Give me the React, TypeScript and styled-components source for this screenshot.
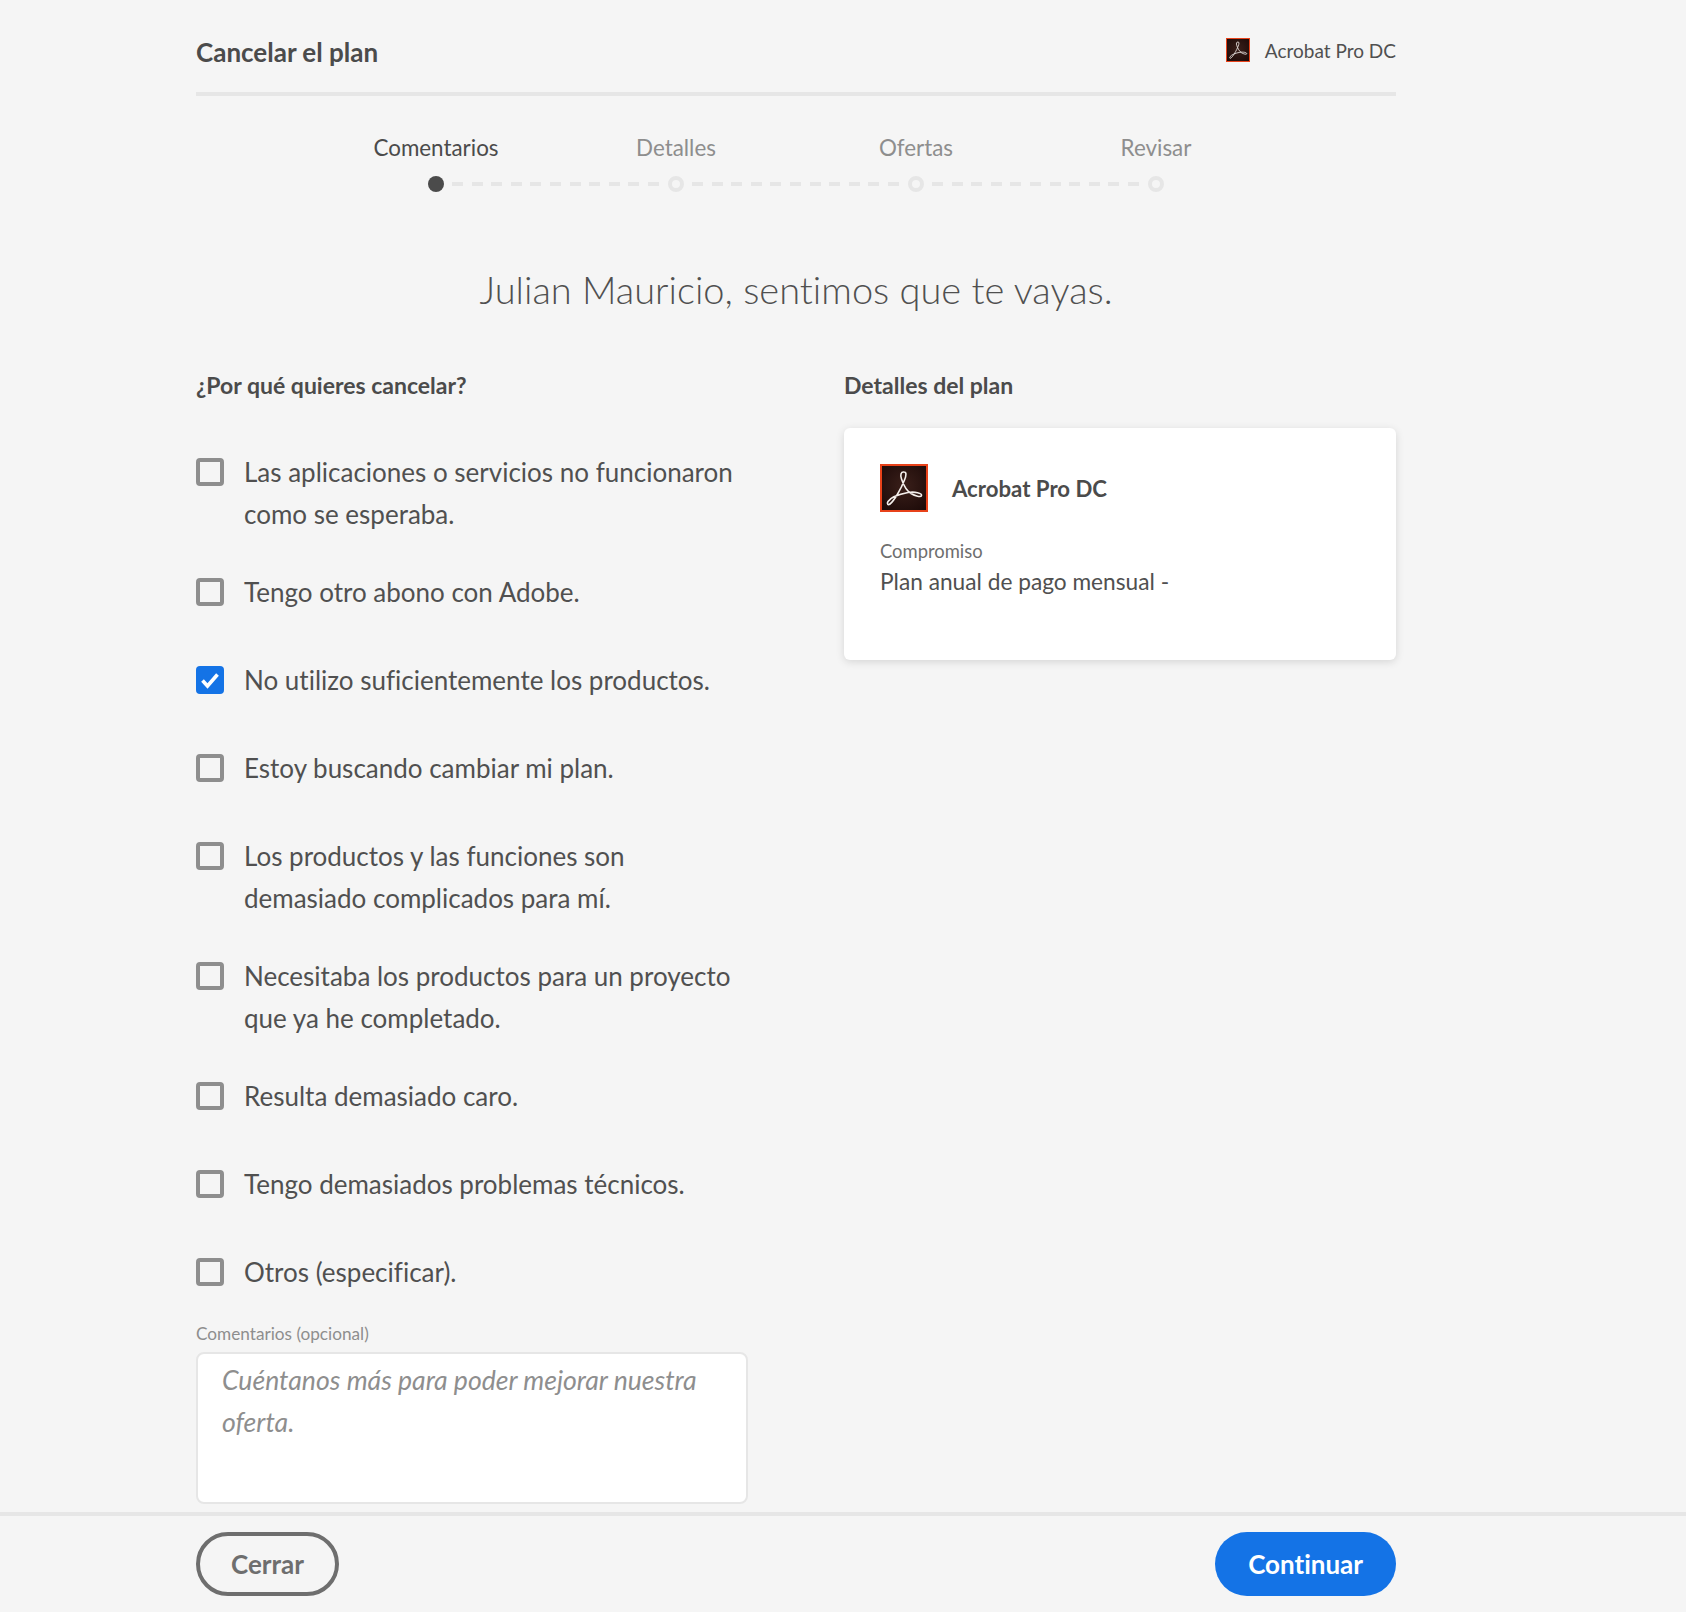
import React from 'react';
import styled, { createGlobalStyle } from 'styled-components';

const COLORS = {
    page: '#f5f5f5',
    dark: '#4b4b4b',
    text: '#505050',
    muted: '#8e8e8e',
    line: '#e6e6e6',
    blue: '#1473e6',
};

const FONT = '"Lato", "Open Sans", sans-serif';

const GlobalStyle = createGlobalStyle`
    html, body {
        margin: 0;
        padding: 0;
        background: ${COLORS.page};
        font-family: ${FONT};
        font-variant-ligatures: none;
        color: ${COLORS.text};
    }
    * {
        box-sizing: border-box;
    }
`;

const Page = styled.div`
    display: flex;
    flex-direction: column;
    height: 1612px;
    overflow: hidden;
`;

const Main = styled.main`
    flex: 1;
    width: 1200px;
    margin-left: 196px;
`;

const Header = styled.header`
    display: flex;
    align-items: center;
    justify-content: space-between;
    height: 96px;
    padding-top: 12px;
    border-bottom: 4px solid ${COLORS.line};
`;

const PlanTitle = styled.h1`
    margin: 0;
    font-size: 26px;
    font-weight: 700;
    color: ${COLORS.dark};
`;

const ProductTag = styled.div`
    display: flex;
    align-items: center;
    gap: 15px;
    margin-bottom: 4px;
    font-size: 19px;
    color: ${COLORS.text};
`;

const Stepper = styled.ol`
    display: grid;
    grid-template-columns: repeat(4, 240px);
    justify-content: center;
    margin: 0;
    padding: 36px 0 0;
    list-style: none;
`;

const Step = styled.li`
    display: flex;
    flex-direction: column;
    align-items: center;
    position: relative;
`;

const StepLabel = styled.span<{ $active?: boolean }>`
    font-size: 22.4px;
    line-height: 32px;
    color: ${(props) => (props.$active ? COLORS.dark : COLORS.muted)};
`;

const StepDot = styled.span<{ $active?: boolean }>`
    width: 16px;
    height: 16px;
    margin-top: 12px;
    border-radius: 50%;
    background: ${(props) => (props.$active ? COLORS.dark : 'transparent')};
    border: ${(props) => (props.$active ? 'none' : `4px solid ${COLORS.line}`)};
`;

const StepDash = styled.span`
    position: absolute;
    left: calc(50% + 16px);
    width: 208px;
    top: 50px;
    height: 4px;
    background: repeating-linear-gradient(
        to right,
        ${COLORS.line} 0,
        ${COLORS.line} 11px,
        transparent 11px,
        transparent 19.6px
    );
`;

const Greeting = styled.h2`
    margin: 69px 0 0;
    font-size: 38px;
    line-height: 56px;
    font-weight: 300;
    text-align: center;
    color: ${COLORS.text};
`;

const Columns = styled.div`
    display: grid;
    grid-template-columns: 552px 552px;
    justify-content: space-between;
    margin-top: 52px;
`;

const SectionTitle = styled.h3`
    margin: 0;
    font-size: 23px;
    line-height: 32px;
    font-weight: 700;
    color: ${COLORS.dark};
`;

const ReasonList = styled.div`
    margin-top: 50px;
`;

const Reason = styled.label`
    display: flex;
    gap: 20px;
    min-height: 52px;
    margin-bottom: 36px;
    font-size: 26px;
    line-height: 42px;
    color: ${COLORS.text};
`;

const Box = styled.span<{ $checked?: boolean }>`
    display: flex;
    align-items: center;
    justify-content: center;
    flex: none;
    width: 28px;
    height: 28px;
    margin-top: 7px;
    border-radius: 4px;
    background: ${(props) => (props.$checked ? COLORS.blue : 'transparent')};
    border: ${(props) => (props.$checked ? 'none' : `4px solid ${COLORS.muted}`)};
`;

const CommentLabel = styled.div`
    margin-top: -17px;
    font-size: 17.2px;
    line-height: 24px;
    color: ${COLORS.muted};
`;

const CommentArea = styled.div`
    height: 152px;
    margin-top: 6px;
    padding: 5px 24px;
    font-size: 26.6px;
    line-height: 42px;
    font-style: italic;
    color: ${COLORS.muted};
    background: #fff;
    border: 2px solid ${COLORS.line};
    border-radius: 8px;
`;

const PlanCard = styled.section`
    height: 232px;
    margin-top: 27px;
    padding: 36px;
    background: #fff;
    border-radius: 6px;
    box-shadow: 0 2px 8px rgba(0, 0, 0, 0.13);
`;

const CardProduct = styled.div`
    display: flex;
    align-items: center;
    gap: 24px;
    font-size: 22.2px;
    font-weight: 700;
    color: ${COLORS.dark};
`;

const CardLabel = styled.div`
    margin-top: 26px;
    font-size: 18.4px;
    line-height: 26px;
    color: #6e6e6e;
`;

const CardValue = styled.div`
    margin-top: 2px;
    font-size: 22.7px;
    line-height: 32px;
    color: ${COLORS.text};
`;

const Footer = styled.footer`
    flex: none;
    display: flex;
    justify-content: space-between;
    align-items: center;
    height: 100px;
    padding: 0 290px 0 196px;
    border-top: 4px solid ${COLORS.line};
`;

const Button = styled.button<{ $primary?: boolean }>`
    height: 64px;
    padding: 0 ${(props) => (props.$primary ? 33 : 31)}px;
    border-radius: 32px;
    font-family: ${FONT};
    font-size: 26px;
    font-weight: 700;
    font-variant-ligatures: none;
    color: ${(props) => (props.$primary ? '#fff' : '#6e6e6e')};
    background: ${(props) => (props.$primary ? COLORS.blue : 'transparent')};
    border: ${(props) => (props.$primary ? 'none' : '4px solid #6e6e6e')};
`;

const AcrobatIcon: React.FC<{ size: number }> = ({ size }) => (
    <svg width={size} height={size} viewBox="0 0 48 48" style={{ flex: 'none' }}>
        <defs>
            <radialGradient id={`acrobat-bg-${size}`} cx="0.5" cy="0.45" r="0.7">
                <stop offset="0" stopColor="#3a1f1a" />
                <stop offset="1" stopColor="#1c0a08" />
            </radialGradient>
        </defs>
        <rect x="1" y="1" width="46" height="46" fill={`url(#acrobat-bg-${size})`} stroke="#e8421a" strokeWidth="2" />
        <path
            d="M24 8C21 7.5 20 11 21.5 15 23.5 21 27 27 31 29.5 35 32 41 33.5 41.5 31.5 42 29 35 27.5 28 28.5 20 30 11 33 8 37.5 6.5 40 8 41.5 10 40 14 37 21 25 24.5 16 26.5 11 26.5 8 24 8z"
            fill="none"
            stroke="#f4efec"
            strokeWidth="1.6"
        />
    </svg>
);

const CheckMark: React.FC = () => (
    <svg width="20" height="20" viewBox="0 0 20 20">
        <path d="M2.5 10.5 7.5 16 17.5 4.5" fill="none" stroke="#fff" strokeWidth="3.6" />
    </svg>
);

const steps = ['Comentarios', 'Detalles', 'Ofertas', 'Revisar'];

const reasons = [
    { text: 'Las aplicaciones o servicios no funcionaron como se esperaba.' },
    { text: 'Tengo otro abono con Adobe.' },
    { text: 'No utilizo suficientemente los productos.', checked: true },
    { text: 'Estoy buscando cambiar mi plan.' },
    { text: 'Los productos y las funciones son demasiado complicados para mí.' },
    { text: 'Necesitaba los productos para un proyecto que ya he completado.' },
    { text: 'Resulta demasiado caro.' },
    { text: 'Tengo demasiados problemas técnicos.' },
    { text: 'Otros (especificar).' },
];

const App: React.FC = () => (
    <Page>
        <GlobalStyle />
        <Main>
            <Header>
                <PlanTitle>Cancelar el plan</PlanTitle>
                <ProductTag>
                    <AcrobatIcon size={24} />
                    Acrobat Pro DC
                </ProductTag>
            </Header>
            <Stepper>
                {steps.map((step, i) => (
                    <Step key={step}>
                        <StepLabel $active={i === 0}>{step}</StepLabel>
                        <StepDot $active={i === 0} />
                        {i < steps.length - 1 && <StepDash />}
                    </Step>
                ))}
            </Stepper>
            <Greeting>Julian Mauricio, sentimos que te vayas.</Greeting>
            <Columns>
                <div>
                    <SectionTitle>¿Por qué quieres cancelar?</SectionTitle>
                    <ReasonList>
                        {reasons.map((reason) => (
                            <Reason key={reason.text}>
                                <Box $checked={reason.checked}>{reason.checked && <CheckMark />}</Box>
                                <span>{reason.text}</span>
                            </Reason>
                        ))}
                    </ReasonList>
                    <CommentLabel>Comentarios (opcional)</CommentLabel>
                    <CommentArea>Cuéntanos más para poder mejorar nuestra oferta.</CommentArea>
                </div>
                <div>
                    <SectionTitle>Detalles del plan</SectionTitle>
                    <PlanCard>
                        <CardProduct>
                            <AcrobatIcon size={48} />
                            Acrobat Pro DC
                        </CardProduct>
                        <CardLabel>Compromiso</CardLabel>
                        <CardValue>Plan anual de pago mensual -</CardValue>
                    </PlanCard>
                </div>
            </Columns>
        </Main>
        <Footer>
            <Button>Cerrar</Button>
            <Button $primary>Continuar</Button>
        </Footer>
    </Page>
);

export default App;
